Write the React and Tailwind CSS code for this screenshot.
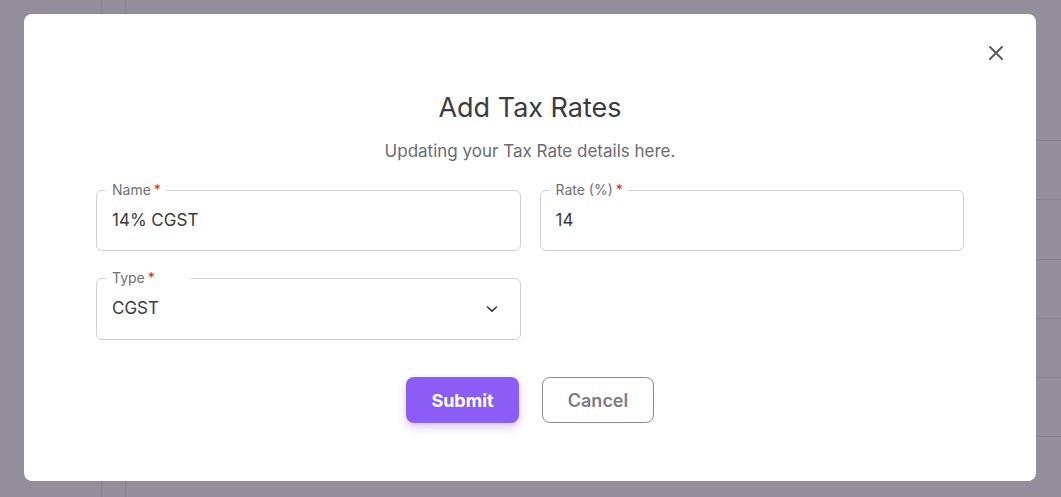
import React from "react";

function Field({ label, value, children, notchPr = "pr-[5px]", h = "h-[61px]" }) {
  return (
    <div className={`relative ${h} rounded-[6px] border border-[#cfcfd4] flex items-center pl-[15px] pr-[22px]`}>
      <span className={`absolute -top-[9px] left-[9px] bg-white pl-[6px] ${notchPr} text-[14px] leading-[16px] text-[#6f6f78]`}>
        {label}
        <span className="text-[#dc2626] ml-[3px]">*</span>
      </span>
      <span className="flex-1 text-[17px] text-[#3a3a40]">{value}</span>
      {children}
    </div>
  );
}

export default function App() {
  return (
    <div
      className="relative w-[1061px] h-[497px] overflow-hidden bg-[#928e9b]"
      style={{ fontFamily: "Inter, 'Noto Sans', sans-serif" }}
    >
      {/* page behind the overlay */}
      <div className="flex h-full">
        <div className="w-[102px] border-r border-[#85818e]" />
        <div className="w-[24px] border-r border-[#85818e]" />
        <div className="flex-1 flex flex-col">
          <div className="h-[141px] border-b border-[#85818e]" />
          <div className="h-[59px] border-b border-[#85818e]" />
          <div className="h-[60px] border-b border-[#85818e]" />
          <div className="h-[59px] border-b border-[#85818e]" />
          <div className="h-[59px] border-b border-[#85818e]" />
          <div className="h-[59px] border-b border-[#85818e]" />
        </div>
      </div>

      {/* modal */}
      <div className="absolute left-[24px] top-[14px] w-[1012px] h-[467px] bg-white rounded-[8px] px-[72px] pt-[77px]">
        <button className="absolute right-[33px] top-[32px] w-[14px] h-[14px]">
          <svg width="14" height="14" viewBox="0 0 14 14" fill="none" stroke="#5a5a5f" strokeWidth="2" strokeLinecap="round">
            <path d="M1 1 13 13M13 1 1 13" />
          </svg>
        </button>
        <h2 className="text-center text-[27px] leading-[34px] text-[#3b3b42] font-normal">Add Tax Rates</h2>
        <p className="mt-[14px] text-center text-[17px] leading-[24px] text-[#6b6b73]">
          Updating your Tax Rate details here.
        </p>
        <div className="mt-[27px] grid grid-cols-2 gap-x-[19px] gap-y-[27px]">
          <Field label="Name" value="14% CGST" />
          <Field label="Rate (%)" value="14" />
          <Field label="Type" value="CGST" notchPr="pr-[35px]" h="h-[62px]">
            <svg width="12" height="8" viewBox="0 0 12 8" fill="none" stroke="#333338" strokeWidth="1.6" strokeLinecap="round" strokeLinejoin="round">
              <path d="M1.5 2 6 6.2 10.5 2" />
            </svg>
          </Field>
        </div>
        <div className="mt-[37px] flex justify-center gap-[23px]">
          <button className="w-[113px] h-[46px] rounded-[8px] bg-[#8b5cf6] text-white text-[18px] font-bold shadow-[0_4px_10px_rgba(139,92,246,0.35)]">
            Submit
          </button>
          <button className="w-[112px] h-[46px] rounded-[8px] border border-[#8a8a90] text-[#7c7c82] text-[18px] font-semibold bg-white">
            Cancel
          </button>
        </div>
      </div>
    </div>
  );
}
